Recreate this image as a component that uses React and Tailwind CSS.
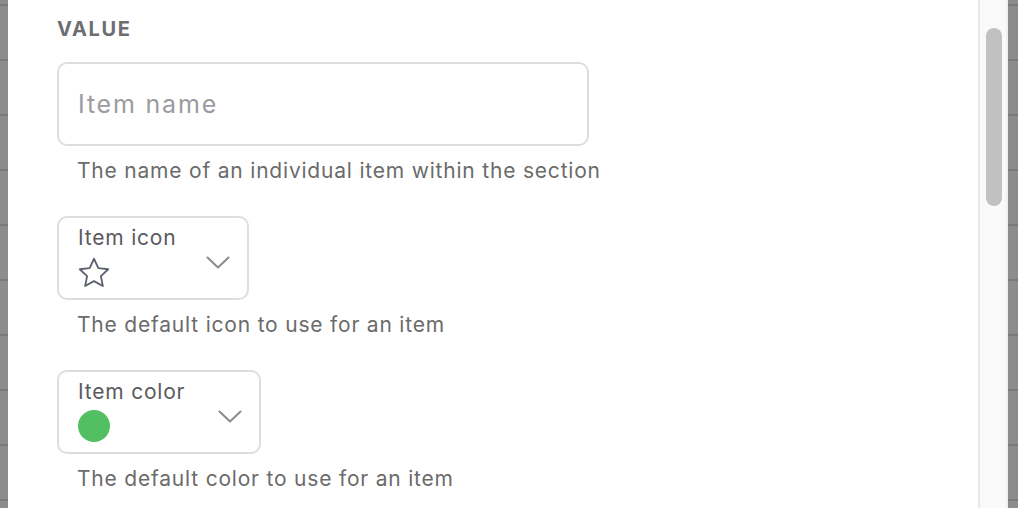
import React from "react";

function Strip() {
  return (
    <div className="w-full h-full bg-[#8c8c8c] flex flex-col overflow-hidden">
      <div className="h-[4px] shrink-0" />
      {Array.from({ length: 10 }).map((_, i) => (
        <div key={i} className="h-[55px] shrink-0 border-t-2 border-[#7a7a7a]" />
      ))}
    </div>
  );
}

function Chevron() {
  return (
    <svg width="24" height="13" viewBox="0 0 24 13" fill="none">
      <polyline points="1.5,1.5 12,11.5 22.5,1.5" stroke="#8a8a90" strokeWidth="2" strokeLinecap="round" strokeLinejoin="round" />
    </svg>
  );
}

function Star() {
  return (
    <svg width="36" height="36" viewBox="0 0 24 24" fill="none" stroke="#5c6070" strokeWidth="1.2" strokeLinejoin="round">
      <path d="M12 2.5l2.9 6.2 6.6.8-4.9 4.6 1.3 6.6L12 17.4l-5.9 3.3 1.3-6.6-4.9-4.6 6.6-.8z" />
    </svg>
  );
}

export default function App() {
  return (
    <div className="w-[1018px] h-[508px] flex bg-white overflow-hidden" style={{ fontFamily: "Inter, 'Noto Sans', sans-serif" }}>
      <div className="w-[8px] h-full shrink-0">
        <Strip />
      </div>
      <div className="flex-1 h-full pl-[49px] pt-[15px]">
        <div className="text-[20px] leading-[27px] font-bold text-[#6d6d72] tracking-[1.6px] pt-[1px]">VALUE</div>
        <div className="mt-[19px] w-[532px] h-[84px] border-2 border-[#dedede] rounded-[10px] flex items-center pl-[19px] pt-[2px]">
          <span className="text-[25px] tracking-[1.8px] text-[#9b9ba0]">Item name</span>
        </div>
        <div className="mt-[11px] pl-[20px] text-[21px] leading-[28px] tracking-[0.8px] text-[#6b6b6b]">The name of an individual item within the section</div>

        <div className="mt-[31px] w-[192px] h-[84px] border-2 border-[#dedede] rounded-[10px] flex items-start pl-[19px] pr-[17px]">
          <div className="flex-1 flex flex-col pt-[8px]">
            <span className="text-[21px] leading-[24px] tracking-[0.8px] text-[#5a5a5e]">Item icon</span>
            <div className="mt-[5px] -ml-[2px]"><Star /></div>
          </div>
          <div className="pt-[38px]"><Chevron /></div>
        </div>
        <div className="mt-[11px] pl-[20px] text-[21px] leading-[28px] tracking-[0.8px] text-[#6b6b6b]">The default icon to use for an item</div>

        <div className="mt-[31px] w-[204px] h-[84px] border-2 border-[#dedede] rounded-[10px] flex items-start pl-[19px] pr-[17px]">
          <div className="flex-1 flex flex-col pt-[8px]">
            <span className="text-[21px] leading-[24px] tracking-[0.8px] text-[#5a5a5e]">Item color</span>
            <div className="mt-[6px] w-[32px] h-[32px] rounded-full bg-[#52bf63]" />
          </div>
          <div className="pt-[38px]"><Chevron /></div>
        </div>
        <div className="mt-[11px] pl-[20px] text-[21px] leading-[28px] tracking-[0.8px] text-[#6b6b6b]">The default color to use for an item</div>
      </div>
      <div className="w-[2px] h-full bg-[#e8e8e8] shrink-0" />
      <div className="w-[26px] h-full bg-[#f9f9f9] shrink-0 pt-[28px] pl-[6px]">
        <div className="w-[16px] h-[178px] rounded-full bg-[#c1c1c1]" />
      </div>
      <div className="w-[2px] h-full bg-[#efefef] shrink-0" />
      <div className="w-[10px] h-full shrink-0">
        <Strip />
      </div>
    </div>
  );
}
